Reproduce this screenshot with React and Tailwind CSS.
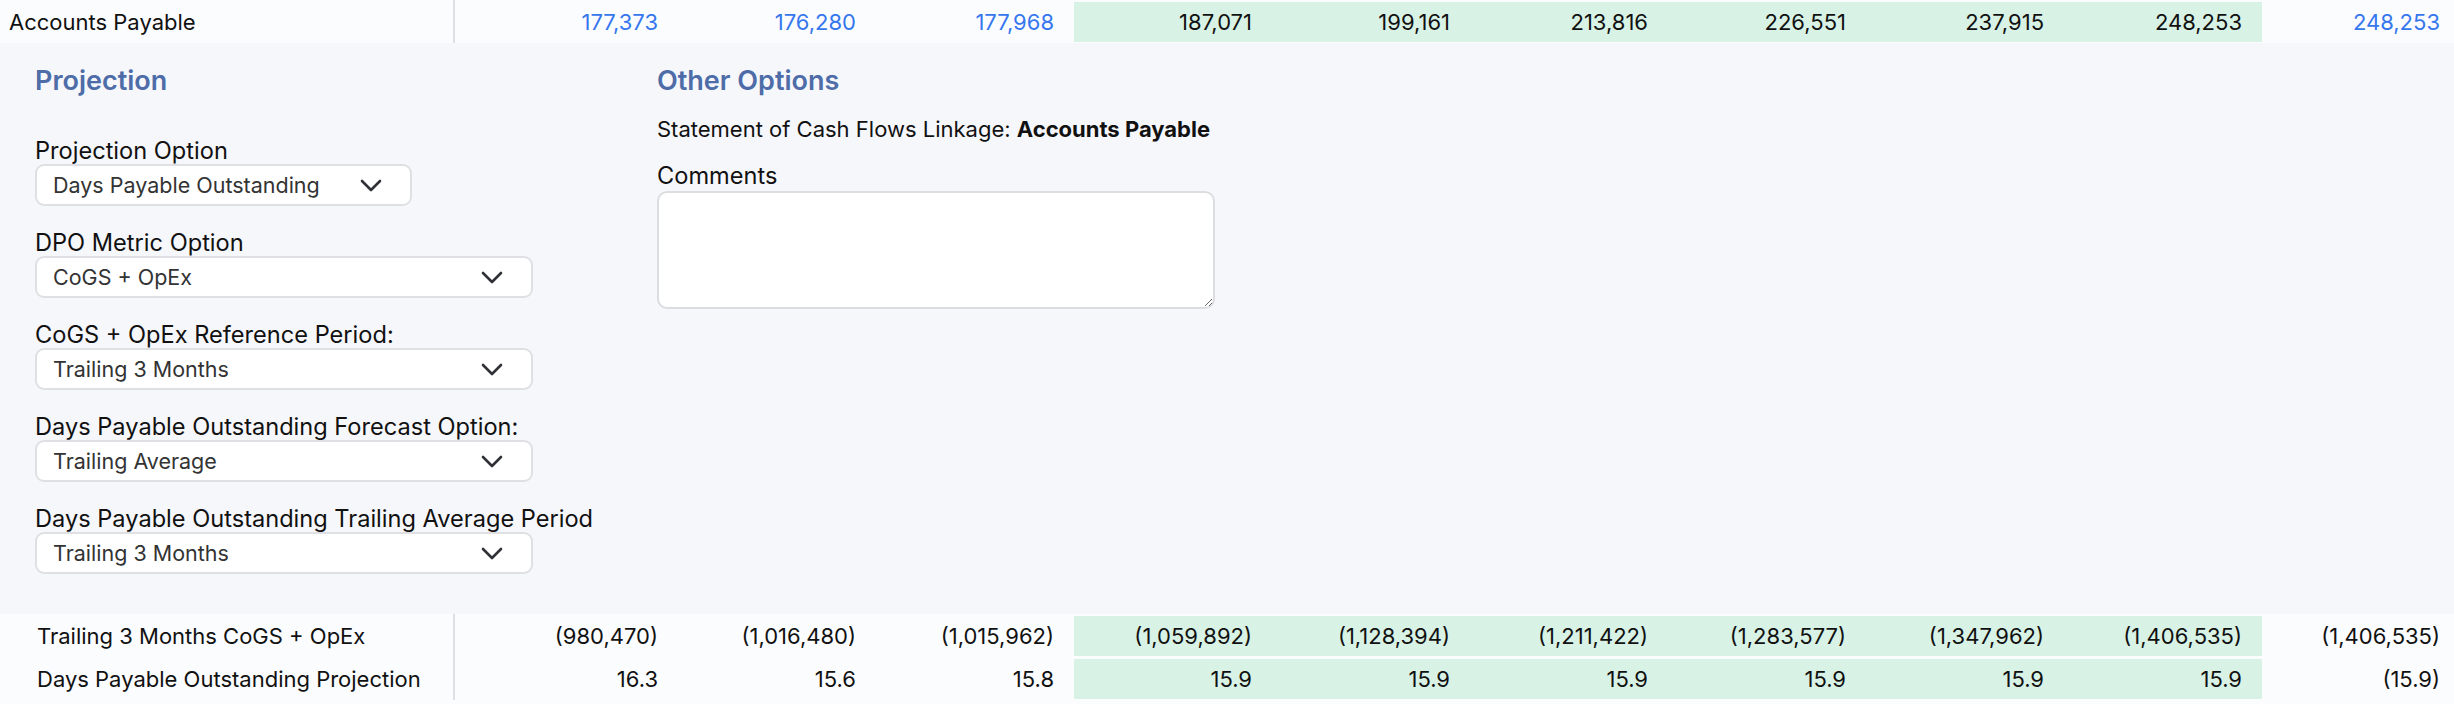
import React from "react";

const actualCols = 3;
const projCols = 6;

const rowsTop = [
  {
    label: "Accounts Payable",
    blue: true,
    values: ["177,373", "176,280", "177,968", "187,071", "199,161", "213,816", "226,551", "237,915", "248,253", "248,253"],
  },
];

const rowsBottom = [
  {
    label: "Trailing 3 Months CoGS + OpEx",
    indent: true,
    values: ["(980,470)", "(1,016,480)", "(1,015,962)", "(1,059,892)", "(1,128,394)", "(1,211,422)", "(1,283,577)", "(1,347,962)", "(1,406,535)", "(1,406,535)"],
  },
  {
    label: "Days Payable Outstanding Projection",
    indent: true,
    values: ["16.3", "15.6", "15.8", "15.9", "15.9", "15.9", "15.9", "15.9", "15.9", "(15.9)"],
  },
];

const selects = [
  { label: "Projection Option", value: "Days Payable Outstanding", narrow: true },
  { label: "DPO Metric Option", value: "CoGS + OpEx" },
  { label: "CoGS + OpEx Reference Period:", value: "Trailing 3 Months" },
  { label: "Days Payable Outstanding Forecast Option:", value: "Trailing Average" },
  { label: "Days Payable Outstanding Trailing Average Period", value: "Trailing 3 Months" },
];

function Row({ label, values, blue, indent }) {
  return (
    <div className="grid h-[43px] grid-cols-[455px_223px_repeat(9,198px)] bg-[#fbfcfe] text-[22px] leading-[26px]">
      <div
        className={`flex items-center border-r-2 border-[#dedfe2] text-[#111] ${
          indent ? "pl-[37px]" : "pl-[9px]"
        }`}
      >
        {label}
      </div>
      {values.map((v, i) => {
        const proj = i >= actualCols && i < actualCols + projCols;
        return (
          <div
            key={i}
            className={`flex items-center justify-end pr-5 ${
              proj
                ? "mt-[2px] mb-[1px] bg-[#d8f2e6] text-[#111]"
                : blue
                ? "text-[#3677ee]"
                : "text-[#111]"
            }`}
          >
            {v}
          </div>
        );
      })}
    </div>
  );
}

function Chevron() {
  return (
    <svg width="22" height="13" viewBox="0 0 22 13" fill="none">
      <polyline
        points="2,2 11,11 20,2"
        stroke="#2f3136"
        strokeWidth="2.6"
        strokeLinecap="round"
        strokeLinejoin="round"
      />
    </svg>
  );
}

function Select({ label, value, narrow }) {
  return (
    <div className="flex flex-col">
      <label className="text-[23.6px] leading-[26px] text-[#111]">{label}</label>
      <div
        className={`flex h-[42px] items-center justify-between rounded-[9px] border-2 border-[#dfe0e3] bg-white pl-[16px] pr-[28px] ${
          narrow ? "w-[377px]" : "w-[498px]"
        }`}
      >
        <span className="text-[21.5px] text-[#333]">{value}</span>
        <Chevron />
      </div>
    </div>
  );
}

export default function App() {
  return (
    <div className="min-h-screen w-[2454px] overflow-hidden bg-[#fbfcfe] font-[Inter,sans-serif]">
      {rowsTop.map((r) => (
        <Row key={r.label} {...r} />
      ))}

      <section className="flex bg-[#f6f7fb] pt-[23px] pb-[40px] pl-[35px]">
        <div className="w-[622px]">
          <h2 className="text-[27px] leading-[30px] font-semibold text-[#4d6ca8]">Projection</h2>
          <div className="mt-[42px] flex flex-col gap-[24px]">
            {selects.map((s) => (
              <Select key={s.label} {...s} />
            ))}
          </div>
        </div>

        <div className="flex flex-col">
          <h2 className="text-[27px] leading-[30px] font-semibold text-[#4d6ca8]">Other Options</h2>
          <p className="mt-[21px] text-[22px] leading-[24px] text-[#111]">
            Statement of Cash Flows Linkage: <span className="font-bold">Accounts Payable</span>
          </p>
          <label className="mt-[22px] text-[23.6px] leading-[26px] text-[#111]">Comments</label>
          <textarea className="mt-[2px] h-[118px] w-[558px] rounded-[10px] border-2 border-[#dcdde1] bg-white p-3 text-[20px] outline-none" />
        </div>
      </section>

      {rowsBottom.map((r) => (
        <Row key={r.label} {...r} />
      ))}
    </div>
  );
}
